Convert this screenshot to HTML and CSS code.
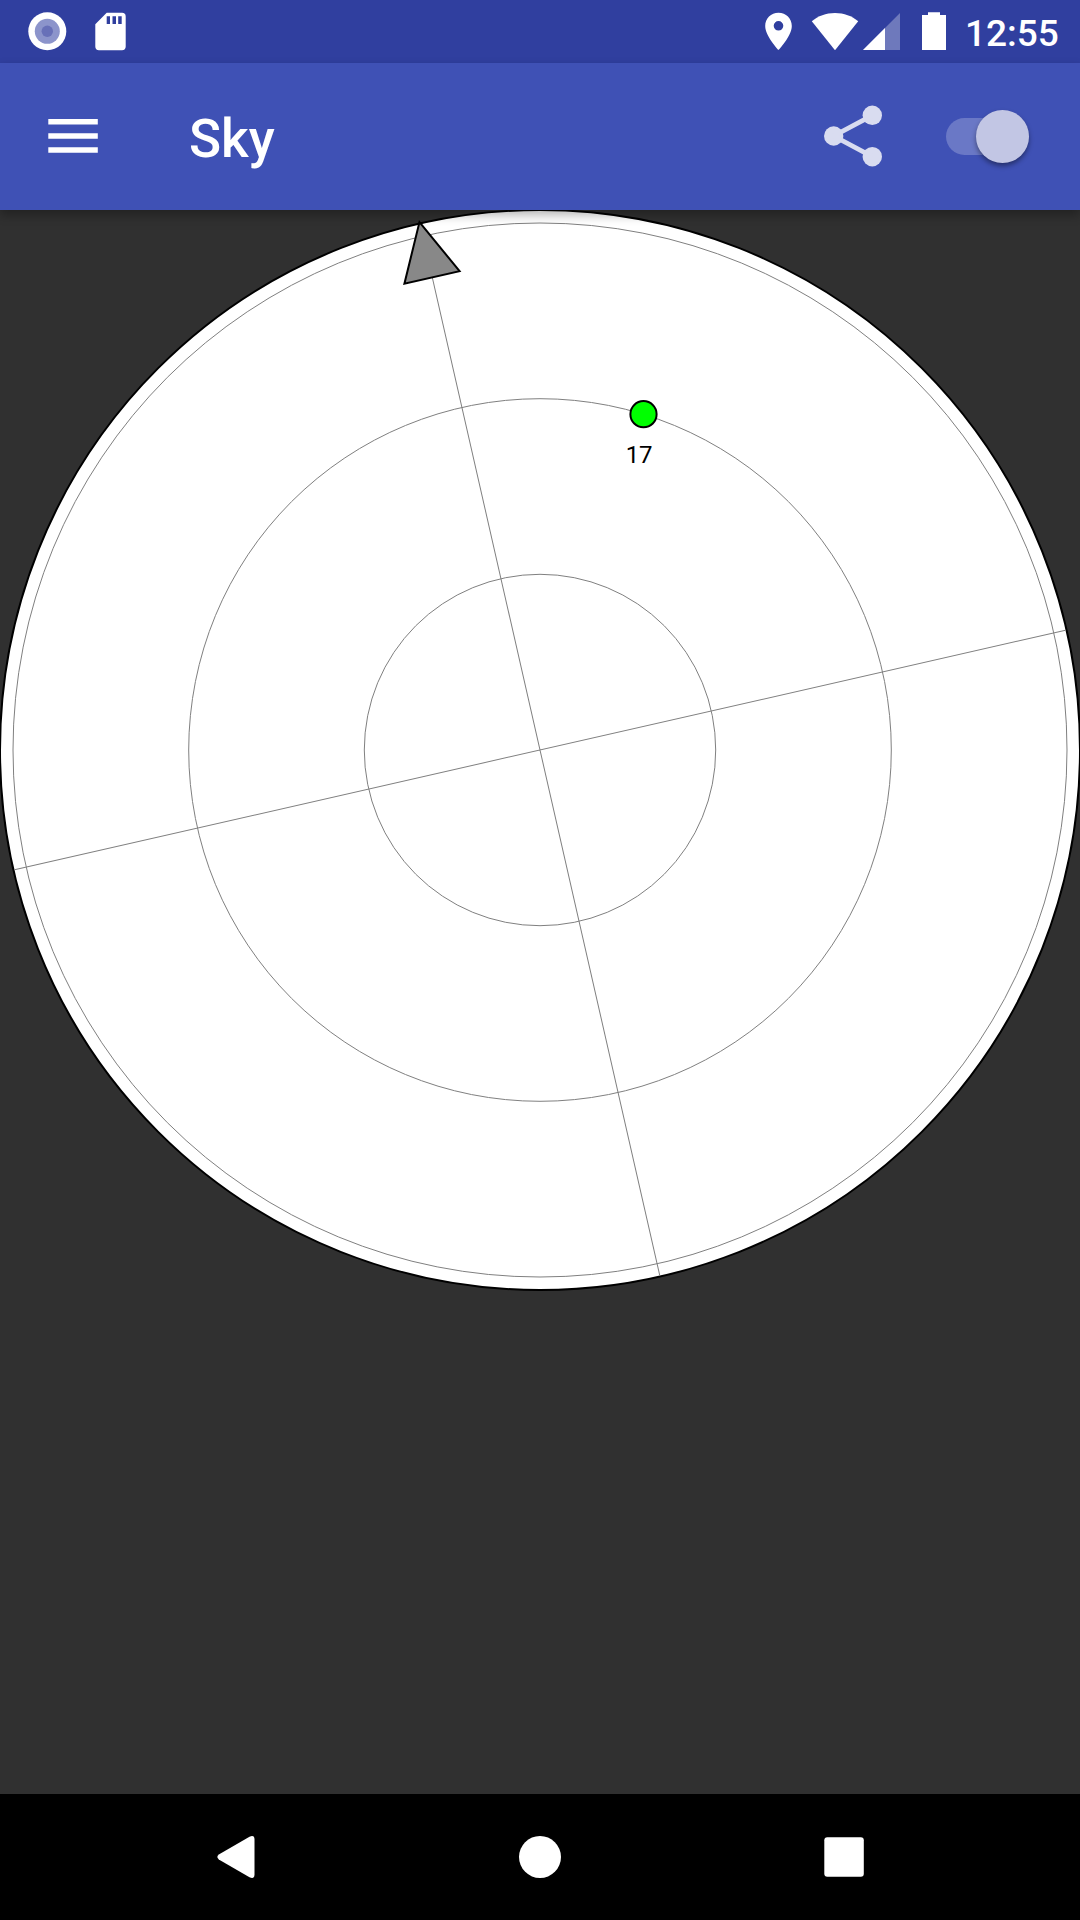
FILE: index.html
```html
<!DOCTYPE html>
<html lang="en">
<head>
<meta charset="utf-8">
<title>Sky</title>
<link rel="stylesheet" href="styles.css">
</head>
<body>
<div class="screen">
  <div class="status-bar">
    <svg class="status-left" width="140" height="63" viewBox="0 0 140 63">
      <circle cx="47.3" cy="31.3" r="19" fill="#fff"/>
      <circle cx="47.3" cy="31.3" r="12.5" fill="#8c94cb"/>
      <circle cx="47.3" cy="31.3" r="5.7" fill="#6870b8"/>
      <path fill="#fff" fill-rule="evenodd" d="M106.7 12.7H122q3.7 0 3.7 3.7V46.600q0 3.700-3.700 3.700H99q-3.700 0-3.700-3.700V24.300ZM106.700 16.300V24H110V16.300ZM112.500 16.300V24H116V16.300ZM118.200 16.300V24H121.700V16.300Z"/>
    </svg>
    <svg class="status-right" width="190" height="63" viewBox="760 0 190 63">
      <path fill="#fff" fill-rule="evenodd" d="M778.500 12.700C771 12.700 765.200 18.500 765.200 26C765.200 36 778.500 50 778.500 50S791.800 36 791.800 26C791.800 18.500 786 12.700 778.500 12.700ZM778.500 21a4.800 4.800 0 1 1 0 9.600a4.800 4.800 0 1 1 0-9.600Z"/>
      <path fill="#fff" d="M835 50.200L811.800 21.300C818 16 826 13 835 13S852 16 858.200 21.300Z"/>
      <path fill="#fff" fill-opacity=".3" d="M900 13V50H863Z"/>
      <path fill="#fff" d="M885 28V50H863Z"/>
      <path fill="#fff" d="M928 12.300H940V15H946V50H922V15H928Z"/>
    </svg>
    <span class="clock">12:55</span>
  </div>
  <header class="toolbar">
    <svg class="menu" width="50" height="34" viewBox="0 0 50 34"><path fill="#fff" d="M.3 0H49.800V5.500H.3ZM.3 14.200H49.800V19.700H.3ZM.3 28.300H49.800V33.800H.3Z"/></svg>
    <h1 class="title">Sky</h1>
    <svg class="share" width="60" height="64" viewBox="823 104 60 64">
      <g fill="#d9dcf0"><circle cx="833.700" cy="136" r="9.700"/><circle cx="872.300" cy="115.300" r="9.700"/><circle cx="872.300" cy="156.700" r="9.700"/></g>
      <path fill="none" stroke="#d9dcf0" stroke-width="4.800" d="M872.300 115.300L833.700 136L872.300 156.700"/>
    </svg>
    <div class="switch"><div class="thumb"></div></div>
  </header>
  <main class="content">
    <svg class="sky" width="1080" height="1090" viewBox="0 0 1080 1090">
      <circle cx="540" cy="540" r="540" fill="#fff" stroke="#000" stroke-width="2"/>
      <g fill="none" stroke="#808080" stroke-width="1">
        <circle cx="540" cy="540" r="527"/>
        <circle cx="540" cy="540" r="351.300"/>
        <circle cx="540" cy="540" r="175.700"/>
        <path transform="rotate(-12.840 540 540)" d="M540 1V1079M1 540H1079"/>
      </g>
      <path transform="rotate(-12.840 540 540)" d="M539.800 -1.500L568 55.300H511.400Z" fill="#888" stroke="#000" stroke-width="2"/>
      <circle cx="643.500" cy="204.200" r="13.100" fill="#0f0" stroke="#000" stroke-width="2"/>
      <text class="sat" x="625.800" y="253">17</text>
    </svg>
  </main>
  <nav class="nav-bar">
    <svg width="1080" height="126" viewBox="0 1794 1080 126" fill="#fff">
      <path d="M218.800 1854.600L249.500 1836.700Q254.500 1834.500 254.500 1839.500V1874.500Q254.500 1879.500 249.500 1877.300L218.800 1859.400Q215.800 1857 218.800 1854.600Z"/>
      <circle cx="540" cy="1857" r="21"/>
      <rect x="824.300" y="1837.300" width="39.500" height="39.500" rx="3"/>
    </svg>
  </nav>
</div>
</body>
</html>
```
FILE: styles.css
```css
body {
  margin: 0;
  font-family: Roboto, sans-serif;
}

.screen {
  display: flex;
  flex-direction: column;
  width: 1080px;
  height: 1920px;
  overflow: hidden;
  background: #303030;
}

svg {
  display: block;
  flex: none;
}

.status-bar {
  display: flex;
  align-items: center;
  height: 63px;
  flex: none;
  background: #303f9f;
  color: #fff;
}

.status-right {
  margin-left: auto;
}

.clock {
  width: 130px;
  padding-left: 15px;
  padding-top: 4px;
  box-sizing: border-box;
  font-size: 37px;
  font-weight: 500;
  line-height: 44px;
}

.toolbar {
  position: relative;
  z-index: 1;
  display: flex;
  align-items: center;
  flex: none;
  height: 147px;
  padding: 0 51px 0 48px;
  box-sizing: border-box;
  background: #3f51b5;
  box-shadow: 0 5px 10px rgba(0, 0, 0, .3);
}

.menu {
  margin-top: -2px;
}

.title {
  margin: 5px 0 0 91px;
  color: #fff;
  font-size: 53px;
  font-weight: 500;
  line-height: 62px;
}

.share {
  margin-left: auto;
  margin-top: -1px;
}

.switch {
  display: flex;
  align-items: center;
  justify-content: flex-end;
  width: 83px;
  height: 37px;
  margin-left: 63px;
  border-radius: 19px;
  background: #6a78c6;
}

.thumb {
  width: 53px;
  height: 53px;
  flex: none;
  border-radius: 50%;
  background: #c2c6e4;
  box-shadow: 0 3px 5px rgba(0, 0, 0, .4);
}

.content {
  flex: 1;
  min-height: 0;
}

.sat {
  font-size: 24px;
  letter-spacing: -0.4px;
  fill: #000;
}

.nav-bar {
  flex: none;
  height: 126px;
  background: #000;
}
```
